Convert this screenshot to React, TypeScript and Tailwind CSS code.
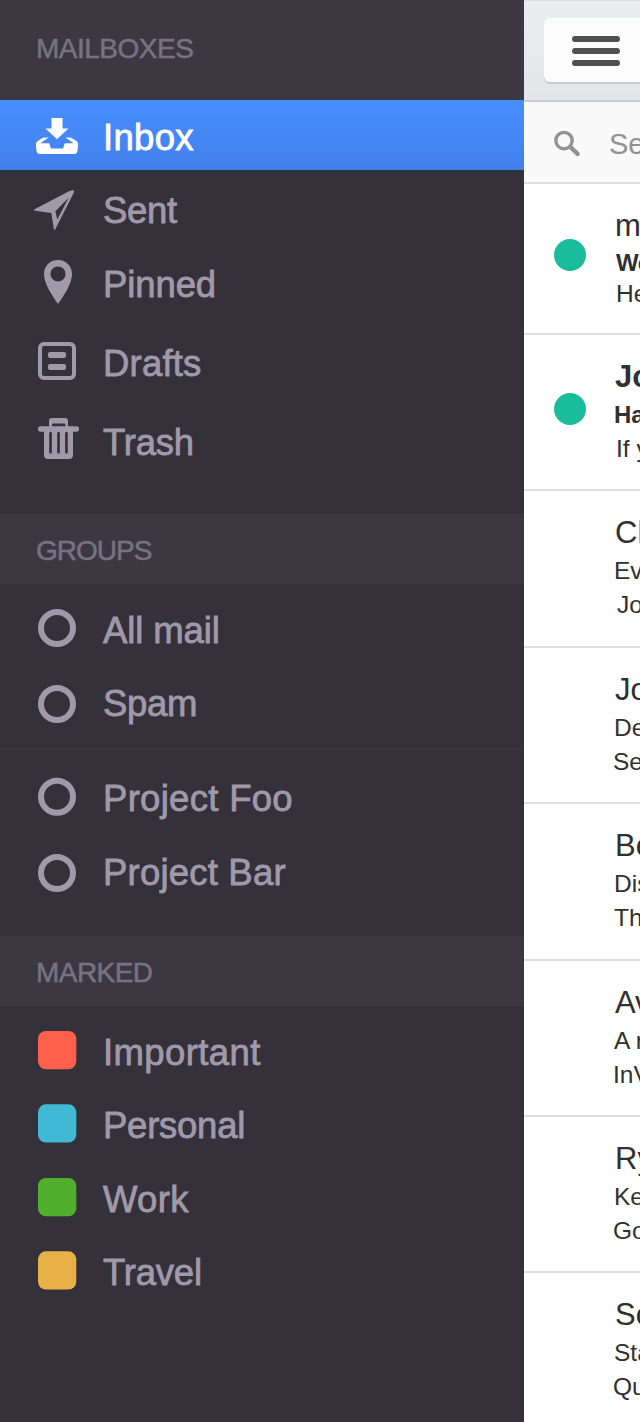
import type { ReactNode } from 'react';

type Item = { label: string; gap: string; icon: ReactNode; spacing?: string; active?: boolean };

const Ring = ({ y }: { y: number }) => (
  <circle cx="57" cy={y} r="16" fill="none" stroke="currentColor" strokeWidth="6" />
);

const Swatch = ({ y, color }: { y: number; color: string }) => (
  <rect x="38" y={y} width="38.3" height="38.3" rx="8" fill={color} />
);

const InboxIcon = () => (
  <g fill="currentColor">
    <path d="M51.5 18H62.5V28.5H68.5L57 39.2L45.5 28.5H51.5Z" />
    <path d="M44 37.6H48.6L40.4 43.2H49.2L51 48.6H63L64.8 43.2H73.6L65.4 37.6H70Q71 37.6 72 38.2L76.4 41Q78 42 78 44V46.5L77.4 51.6Q77 54 74.6 54H39.4Q37 54 36.6 51.6L36 46.5V44Q36 42 37.6 41L42 38.2Q43 37.6 44 37.6Z" />
  </g>
);

const SentIcon = () => (
  <path
    fill="currentColor"
    fillRule="evenodd"
    d="M72.4 17.2Q74.6 16.8 73.9 19.6L55.4 56Q54.2 58 53.8 55.5L51.3 40L35.2 37.8Q33 37.2 35 36L69 18.2ZM68.6 24.8L55.4 38.2L57.3 46.6Z"
  />
);

const PinIcon = () => (
  <path
    fill="currentColor"
    fillRule="evenodd"
    d="M58 13C66 13 72 19 72 27C72 36 65 47 58 57C51 47 44 36 44 27C44 19 50 13 58 13ZM58 19.4A7.5 7.5 0 1 0 58 34.4A7.5 7.5 0 1 0 58 19.4Z"
  />
);

const DraftsIcon = () => (
  <g>
    <rect x="40" y="18" width="34" height="34" rx="4" fill="none" stroke="currentColor" strokeWidth="4" />
    <rect x="48" y="26" width="18" height="6" rx="2" fill="currentColor" />
    <rect x="48" y="38" width="18" height="6" rx="2" fill="currentColor" />
  </g>
);

const TrashIcon = () => (
  <path
    fill="currentColor"
    fillRule="evenodd"
    d="M52 13H65Q68 13 68 16V21.3H76.5Q79 21.3 79 24Q79 26.8 76.5 26.8H73V50Q73 54 69 54H48Q44 54 44 50V26.8H40.5Q38 26.8 38 24Q38 21.3 40.5 21.3H49V16Q49 13 52 13ZM53.5 18.6Q52 18.6 52 20V21.3H65.5V20Q65.5 18.6 64 18.6ZM49.2 28.5V47Q49.2 48.8 50.5 48.8Q51.9 48.8 51.9 47V28.5Q51.9 26.8 50.5 26.8Q49.2 26.8 49.2 28.5ZM57.2 28.5V47Q57.2 48.8 58.5 48.8Q59.9 48.8 59.9 47V28.5Q59.9 26.8 58.5 26.8Q57.2 26.8 57.2 28.5ZM65.1 28.5V47Q65.1 48.8 66.4 48.8Q67.8 48.8 67.8 47V28.5Q67.8 26.8 66.4 26.8Q65.1 26.8 65.1 28.5Z"
  />
);

const mailboxes: Item[] = [
  { label: 'Inbox', gap: '', icon: <InboxIcon />, spacing: 'tracking-[0.3px]', active: true },
  { label: 'Sent', gap: 'mt-[3px]', icon: <SentIcon />, spacing: 'tracking-[-0.3px]' },
  { label: 'Pinned', gap: 'mt-1', icon: <PinIcon />, spacing: 'tracking-[-0.1px]' },
  { label: 'Drafts', gap: 'mt-[9px]', icon: <DraftsIcon />, spacing: 'tracking-[0.2px]' },
  { label: 'Trash', gap: 'mt-[9px]', icon: <TrashIcon />, spacing: 'tracking-[-0.2px]' },
];

const mailGroups: Item[] = [
  { label: 'All mail', gap: 'mt-[9px]', icon: <Ring y={35} />, spacing: 'tracking-[-0.1px]' },
  { label: 'Spam', gap: 'mt-[3px]', icon: <Ring y={38} />, spacing: 'tracking-[-0.3px]' },
];

const projects: Item[] = [
  { label: 'Project Foo', gap: 'mt-[11px]', icon: <Ring y={35.7} /> },
  { label: 'Project Bar', gap: 'mt-1', icon: <Ring y={38} />, spacing: 'tracking-[0.2px]' },
];

const marked: Item[] = [
  { label: 'Important', gap: 'mt-[9px]', icon: <Swatch y={16} color="#ff604b" />, spacing: 'tracking-[0.4px]' },
  { label: 'Personal', gap: 'mt-[3px]', icon: <Swatch y={16.3} color="#3fb9d4" />, spacing: 'tracking-[-0.25px]' },
  { label: 'Work', gap: 'mt-1', icon: <Swatch y={16} color="#51af2e" /> },
  { label: 'Travel', gap: 'mt-[3px]', icon: <Swatch y={16.3} color="#e8b148" />, spacing: 'tracking-[-0.2px]' },
];

function Row({ item }: { item: Item }) {
  return (
    <div
      className={`flex h-[70px] shrink-0 ${item.gap} ${
        item.active ? 'bg-linear-to-b from-[#488eff] to-[#4180ea] text-white' : 'text-[#9f99aa]'
      }`}
    >
      <svg viewBox="0 0 103 70" className="h-[70px] w-[103px] shrink-0">
        {item.icon}
      </svg>
      <span
        className={`pt-[18px] text-[36.5px] leading-10 whitespace-nowrap [-webkit-text-stroke:0.8px_currentColor] ${
          item.spacing ?? 'tracking-[0.3px]'
        }`}
      >
        {item.label}
      </span>
    </div>
  );
}

function Heading({ text, className }: { text: string; className: string }) {
  return (
    <h2
      className={`shrink-0 bg-[#3c3842] text-[28px] leading-9 text-[#777282] [-webkit-text-stroke:0.5px_currentColor] ${className}`}
    >
      {text}
    </h2>
  );
}

type Mail = { from: string; subject: string; preview: string; unread?: boolean; a: string; b: string; c: string };

const mails: Mail[] = [
  { from: 'm', subject: 'We', preview: 'He', unread: true, a: 'pl-[91px]', b: 'pl-[92px] font-bold text-[24px] tracking-[-0.5px] -mt-px mb-px', c: 'pl-[92px] -mt-[4px]' },
  { from: 'Jo', subject: 'Ha', preview: 'If y', unread: true, a: 'pl-[91px] font-bold', b: 'pl-[90px] font-bold text-[24px]', c: 'pl-[92px]' },
  { from: 'Ch', subject: 'Ev', preview: 'Jo', a: 'pl-[91px]', b: 'pl-[90px] text-[24.5px]', c: 'pl-[93px]' },
  { from: 'Jo', subject: 'De', preview: 'Se', a: 'pl-[91px]', b: 'pl-[90px] text-[24.5px]', c: 'pl-[89px]' },
  { from: 'Be', subject: 'Dis', preview: 'Th', a: 'pl-[91px]', b: 'pl-[90px] text-[24.5px]', c: 'pl-[90px]' },
  { from: 'Av', subject: 'A r', preview: 'InV', a: 'pl-[91px]', b: 'pl-[90px] text-[24.5px]', c: 'pl-[89px]' },
  { from: 'Ry', subject: 'Ke', preview: 'Go', a: 'pl-[91px]', b: 'pl-[90px] text-[24.5px]', c: 'pl-[89px]' },
  { from: 'So', subject: 'Sta', preview: 'Qu', a: 'pl-[91px]', b: 'pl-[90px] text-[24.5px]', c: 'pl-[89px]' },
];

function MailRow({ mail, first }: { mail: Mail; first: boolean }) {
  return (
    <article
      className={`relative shrink-0 overflow-hidden border-b-2 border-[#dfdfdf] bg-white pt-[22px] whitespace-nowrap text-[#303030] ${
        first ? 'h-[151px]' : 'h-[156.4px]'
      }`}
    >
      {mail.unread && (
        <span
          className={`absolute left-[30px] size-8 rounded-full bg-[#1abc9c] ${first ? 'top-[55px]' : 'top-[58px]'}`}
        />
      )}
      <p className={`text-[31px] leading-10 ${mail.a}`}>{mail.from}</p>
      <p className={`leading-9 ${mail.b}`}>{mail.subject}</p>
      <p className={`text-[24.5px] leading-[32px] ${mail.c}`}>{mail.preview}</p>
    </article>
  );
}

export default function App() {
  return (
    <div className="flex h-[1422px] w-[640px] overflow-hidden bg-white font-['Liberation_Sans',Arial,sans-serif]">
      <nav className="flex w-[524px] shrink-0 flex-col bg-[#35313b]">
        <Heading text="MAILBOXES" className="h-[100px] pt-[31px] pl-9 tracking-[-0.5px]" />
        {mailboxes.map((item) => (
          <Row key={item.label} item={item} />
        ))}
        <Heading text="GROUPS" className="mt-[39px] h-[70px] pt-[19px] pl-9 tracking-[-1px]" />
        {mailGroups.map((item) => (
          <Row key={item.label} item={item} />
        ))}
        <hr className="mt-3 h-0.5 shrink-0 border-0 bg-[#3c3842]" />
        {projects.map((item) => (
          <Row key={item.label} item={item} />
        ))}
        <Heading text="MARKED" className="mt-[31px] h-[70px] pt-[19px] pl-9 tracking-[-0.55px]" />
        {marked.map((item) => (
          <Row key={item.label} item={item} />
        ))}
      </nav>

      <main className="flex w-[116px] shrink-0 flex-col overflow-hidden">
        <header className="flex h-[102px] shrink-0 border-t border-b-2 border-t-[#dcdde0] border-b-[#cbccd0] bg-linear-to-b from-[#ecedef] to-[#e4e5e8] pt-[17px] pl-5">
          <button className="flex h-[64px] w-24 items-start rounded-l-[6px] bg-[#fcfcfc] pt-[18px] pl-7 shadow-[0_2px_0_#c9cacf]">
            <svg viewBox="0 0 48 30" className="h-[30px] w-12" fill="#505050">
              <rect width="48" height="6" rx="3" />
              <rect y="12" width="48" height="6" rx="3" />
              <rect y="24" width="48" height="6" rx="3" />
            </svg>
          </button>
        </header>
        <div className="flex h-[82px] shrink-0 border-b-2 border-[#dedede] bg-[#f9f9f9] pt-[22px] pl-[30px] text-[#929292]">
          <svg
            viewBox="0 0 28 40"
            className="h-10 w-7 shrink-0"
            fill="none"
            stroke="currentColor"
            strokeLinecap="round"
          >
            <circle cx="10" cy="16.6" r="8.2" strokeWidth="3.4" />
            <path d="M16.6 23.2L23.6 30" strokeWidth="4.4" />
          </svg>
          <span className="pl-[27px] text-[29px] leading-10">Se</span>
        </div>
        {mails.map((mail, i) => (
          <MailRow key={i} mail={mail} first={i === 0} />
        ))}
      </main>
    </div>
  );
}
